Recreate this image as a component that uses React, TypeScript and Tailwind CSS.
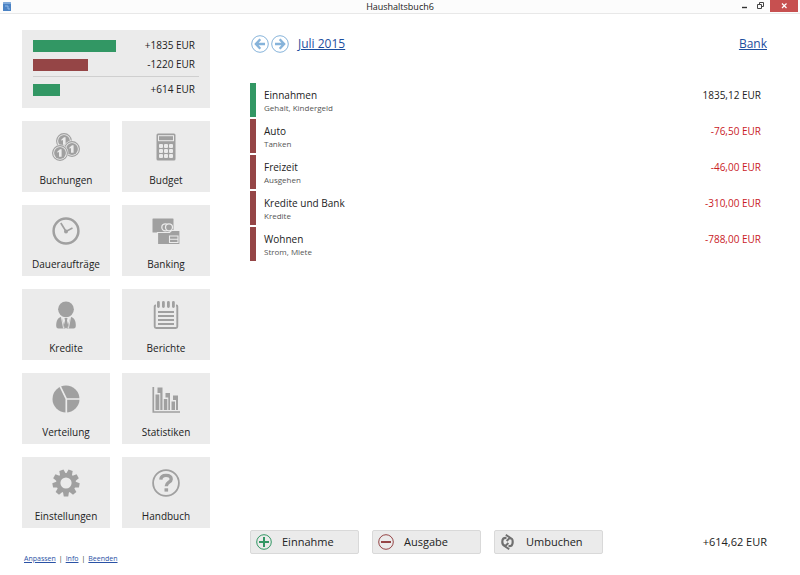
import type { ReactNode } from 'react';

interface Tile {
  label: string;
  icon: ReactNode;
}

interface Category {
  name: string;
  details: string;
  amount: string;
  income?: boolean;
}

const categories: Category[] = [
  { name: 'Einnahmen', details: 'Gehalt, Kindergeld', amount: '1835,12 EUR', income: true },
  { name: 'Auto', details: 'Tanken', amount: '-76,50 EUR' },
  { name: 'Freizeit', details: 'Ausgehen', amount: '-46,00 EUR' },
  { name: 'Kredite und Bank', details: 'Kredite', amount: '-310,00 EUR' },
  { name: 'Wohnen', details: 'Strom, Miete', amount: '-788,00 EUR' },
];

const summary = [
  { value: 83, amount: '+1835 EUR', color: 'bg-[#329764]' },
  { value: 55, amount: '-1220 EUR', color: 'bg-[#954546]' },
];

function TileIcon({ children }: { children: ReactNode }) {
  return (
    <svg viewBox="0 0 28 28" className="size-7 fill-[#a0a0a0]" aria-hidden="true">
      {children}
    </svg>
  );
}

function Coin({ x, y }: { x: number; y: number }) {
  return (
    <g transform={`translate(${x} ${y})`}>
      <circle r="8.4" fill="#ebebeb" />
      <circle r="7.4" fill="none" stroke="#a0a0a0" strokeWidth="1.1" />
      <circle r="5.9" />
      <path d="M-2.6 -1.6L0 -3.8H1.6V3.8H-1V-1L-2.6 -.2z" fill="#ebebeb" />
    </g>
  );
}

const toothAngles = [0, 40, 80, 120, 160, 200, 240, 280, 320];
const dots = [0, 1, 2];

const tiles: Tile[] = [
  {
    label: 'Buchungen',
    icon: (
      <TileIcon>
        <Coin x={12} y={8} />
        <Coin x={20} y={16} />
        <Coin x={8} y={20} />
      </TileIcon>
    ),
  },
  {
    label: 'Budget',
    icon: (
      <TileIcon>
        <rect x="4.5" y="0.5" width="19" height="27" rx="1.5" />
        <rect x="6.5" y="2.7" width="15" height="5" fill="none" stroke="#ebebeb" strokeWidth="1" />
        {dots.map((row) =>
          dots.map((col) => (
            <rect
              key={`${row}-${col}`}
              x={7 + col * 5}
              y={11 + row * 5}
              width="4"
              height="4"
              rx="1"
              fill="#ebebeb"
            />
          )),
        )}
      </TileIcon>
    ),
  },
  {
    label: 'Daueraufträge',
    icon: (
      <TileIcon>
        <circle cx="14" cy="14" r="12.4" fill="none" stroke="#a0a0a0" strokeWidth="2.5" />
        <path d="M8.8 6L14 14.4L20.5 11" fill="none" stroke="#a0a0a0" strokeWidth="1.7" />
        <circle cx="14" cy="14.4" r="2" />
      </TileIcon>
    ),
  },
  {
    label: 'Banking',
    icon: (
      <TileIcon>
        <rect x="0.5" y="1.5" width="21" height="14" rx="0.6" />
        <circle cx="13.3" cy="10.3" r="3.5" fill="none" stroke="#ebebeb" strokeWidth="1.3" />
        <circle cx="17" cy="10.3" r="3.5" stroke="#ebebeb" strokeWidth="1.3" />
        <path d="M5.5 15.5h12l2-2h8.5v14H5.500z" stroke="#ebebeb" strokeWidth="1.2" />
        <path d="M17.500 19h8.500v6.500h-8.500zM17.500 22.200h8.500" fill="none" stroke="#ebebeb" strokeWidth="1.1" />
      </TileIcon>
    ),
  },
  {
    label: 'Kredite',
    icon: (
      <TileIcon>
        <circle cx="14" cy="8.300" r="7.900" />
        <path d="M9.500 15.800L13 27.500H6.500C4.800 27.500 4.200 26.500 4.200 24.500C4.200 19.500 6 16.800 9.500 15.800z" />
        <path d="M18.500 15.800L15 27.500H21.500C23.200 27.500 23.800 26.500 23.800 24.500C23.800 19.500 22 16.800 18.500 15.800z" />
        <path d="M12.500 17H15.500L15 19.500L16.300 25L14 27.800L11.700 25L13 19.500z" />
        <path d="M9.300 15.500L11.600 27.500M18.700 15.500L16.400 27.500" stroke="#ebebeb" strokeWidth="0.900" />
      </TileIcon>
    ),
  },
  {
    label: 'Berichte',
    icon: (
      <TileIcon>
        <path d="M4 4.500H3.500Q2.700 4.500 2.700 5.500V25.500Q2.700 27 4.200 27H23.800Q25.300 27 25.300 25.500V5.500Q25.300 4.500 24.500 4.500H24" fill="none" stroke="#a0a0a0" strokeWidth="1.900" />
        <path d="M6.400 1.500v4M11.400 1.500v4M16.400 1.500v4M21.400 1.500v4" stroke="#a0a0a0" strokeWidth="2.800" strokeLinecap="round" />
        <path d="M6 11h16M6 15h16M6 19h16M6 23h16" stroke="#a0a0a0" strokeWidth="1.800" />
      </TileIcon>
    ),
  },
  {
    label: 'Verteilung',
    icon: (
      <TileIcon>
        <circle cx="14" cy="14" r="13.500" />
        <path d="M7.500 0L14.300 14V28M14.300 14H28" fill="none" stroke="#ebebeb" strokeWidth="1.700" />
      </TileIcon>
    ),
  },
  {
    label: 'Statistiken',
    icon: (
      <TileIcon>
        <path d="M1.300 2V27H28" fill="none" stroke="#a0a0a0" strokeWidth="1.700" />
        <path d="M3.500 9.500h3.800v15.500H3.500zM5.500 2.500h5v22.500H8.300V8H5.500zM11.800 14h3.500v11h-3.500zM13.500 8h4.500v17h-1.700V12.500h-2.800zM19.500 16.500h3.500v8.500h-3.500zM21 10.500h5v14.500h-2V15h-3z" />
      </TileIcon>
    ),
  },
  {
    label: 'Einstellungen',
    icon: (
      <TileIcon>
        {toothAngles.map((angle) => (
          <path
            key={angle}
            d="M10.800 6L11.800 0.500H16.200L17.200 6z"
            transform={`rotate(${angle + 20} 14 14)`}
          />
        ))}
        <circle cx="14" cy="14" r="7.800" fill="none" stroke="#a0a0a0" strokeWidth="4.400" />
      </TileIcon>
    ),
  },
  {
    label: 'Handbuch',
    icon: (
      <TileIcon>
        <circle cx="14" cy="14" r="12.900" fill="none" stroke="#a0a0a0" strokeWidth="1.800" />
        <path d="M8.800 10.600C9 7.700 11 6.400 14 6.400C17 6.400 19.200 7.700 19.200 10.200C19.200 13.300 14.300 13.200 14.300 17.200" fill="none" stroke="#a0a0a0" strokeWidth="3.400" />
        <rect x="12.500" y="19.300" width="3.600" height="3.300" />
      </TileIcon>
    ),
  },
];

function ArrowIcon({ flip }: { flip?: boolean }) {
  return (
    <svg
      viewBox="0 0 18 18"
      className={flip ? 'size-[18px] rotate-180' : 'size-[18px]'}
      fill="none"
      stroke="#86b3da"
      aria-hidden="true"
    >
      <circle cx="9" cy="9" r="8.300" strokeWidth="1" />
      <path d="M9.300 4.300L4.900 9L9.300 13.700M5.500 9H14" strokeWidth="2.400" />
    </svg>
  );
}

function PlusIcon() {
  return (
    <svg viewBox="0 0 16 16" className="size-4" fill="none" stroke="#329764" aria-hidden="true">
      <circle cx="8" cy="8" r="7.300" />
      <path d="M8 3v10M3 8h10" strokeWidth="2" />
    </svg>
  );
}

function MinusIcon() {
  return (
    <svg viewBox="0 0 16 16" className="size-4" fill="none" stroke="#954546" aria-hidden="true">
      <circle cx="8" cy="8" r="7.300" />
      <path d="M3 8h10" strokeWidth="2" />
    </svg>
  );
}

function TransferIcon() {
  return (
    <svg viewBox="0 0 16 16" className="size-4" fill="none" stroke="#707070" aria-hidden="true">
      <path
        d="M5.500 11.800C3 11.600 2.300 10.500 2.300 8C2.300 4.800 3.500 3.600 6.500 3.800M9.500 4.200C12.500 4.400 12.700 5.500 12.700 8C12.700 11.200 11.500 12.400 8.500 12.200"
        strokeWidth="2.200"
      />
      <path d="M5.800 0.800L10 3.600L6.600 7M9.200 15.200L5 12.400L8.400 9" strokeWidth="1.900" />
    </svg>
  );
}

function ActionButton({ label, icon }: { label: string; icon: ReactNode }) {
  return (
    <button
      type="button"
      className="flex h-6 w-[109px] items-center gap-2.5 rounded-xs border border-[#d9d9d9] bg-[#ebebeb] px-[5px] text-[11px]"
    >
      {icon}
      {label}
    </button>
  );
}

function TitleBar() {
  return (
    <header className="grid h-3.5 grid-cols-[1fr_auto_1fr] items-center border-b border-[#e8e8e8] bg-[#fcfcfc]">
      <svg viewBox="0 0 8 9" className="ml-[3px] h-[9px] w-2" aria-hidden="true">
        <rect width="8" height="9" rx="0.500" fill="#4a82c4" />
        <path d="M0 1h8" stroke="#b5d0ee" />
        <path d="M2 4h3v3h2" fill="none" stroke="#8fb8e6" />
      </svg>
      <h1 className="text-[9px] leading-3">Haushaltsbuch6</h1>
      <div className="flex h-full items-start justify-end pr-0.5">
        <button type="button" aria-label="Minimieren" className="h-3 w-4">
          <svg viewBox="0 0 16 12" className="h-3 w-4" aria-hidden="true">
            <path d="M6 7.500h5" stroke="#333" strokeWidth="1.400" />
          </svg>
        </button>
        <button type="button" aria-label="Verkleinern" className="h-3 w-4">
          <svg viewBox="0 0 16 12" className="h-3 w-4" fill="none" stroke="#444" aria-hidden="true">
            <path d="M5.500 4.500h4v4h-4zM7.500 4.500v-2h4v4h-2" />
          </svg>
        </button>
        <button type="button" aria-label="Schließen" className="ml-0.5 h-3 w-7 bg-[#c75050]">
          <svg viewBox="0 0 28 12" className="h-3 w-7" aria-hidden="true">
            <path d="M12 3.500l4.500 4.500M16.500 3.500l-4.500 4.500" stroke="#fff" strokeWidth="1.200" />
          </svg>
        </button>
      </div>
    </header>
  );
}

function Summary() {
  return (
    <section className="bg-[#ebebeb] px-[11px] pt-1.5 pb-1.5">
      {summary.map((row) => (
        <div key={row.amount} className="flex h-[19px] items-center justify-between pr-1">
          <div className={`h-3 ${row.color}`} style={{ width: row.value }} />
          <span className="text-[10px]">{row.amount}</span>
        </div>
      ))}
      <div className="mt-0.5 flex h-[26px] items-center justify-between border-t border-[#cfcfcf] pr-1">
        <div className="h-3 w-[27px] bg-[#329764]" />
        <span className="text-[10px]">+614 EUR</span>
      </div>
    </section>
  );
}

export default function App() {
  return (
    <div className="flex min-h-screen flex-col bg-white font-['Open_Sans','Noto_Sans',sans-serif] text-[#222]">
      <TitleBar />
      <div className="flex flex-1 gap-10 pr-[33px] pl-[22px]">
        <aside className="flex w-[188px] shrink-0 flex-col gap-[13px] pt-4 pb-2.5">
          <Summary />
          <nav className="grid grid-cols-2 gap-x-3 gap-y-[13px]">
            {tiles.map((tile) => (
              <button
                key={tile.label}
                type="button"
                className="flex h-[71px] flex-col items-center gap-3 bg-[#ebebeb] pt-3 text-[10px] leading-[14px]"
              >
                {tile.icon}
                {tile.label}
              </button>
            ))}
          </nav>
          <div className="mt-auto flex gap-[3px] pl-0.5 text-[7px] leading-3 text-[#2a52a5]">
            <a href="#anpassen" className="underline">Anpassen</a>
            <span className="text-[#222]">|</span>
            <a href="#info" className="underline">Info</a>
            <span className="text-[#222]">|</span>
            <a href="#beenden" className="underline">Beenden</a>
          </div>
        </aside>

        <main className="flex flex-1 flex-col pt-5 pb-[21px]">
          <div className="flex h-5 items-center text-xs text-[#1d4e9e]">
            <div className="mr-[9px] flex gap-0.5 pl-px">
              <button type="button" aria-label="Vorheriger Monat">
                <ArrowIcon />
              </button>
              <button type="button" aria-label="Nächster Monat">
                <ArrowIcon flip />
              </button>
            </div>
            <a href="#monat" className="underline">Juli 2015</a>
            <a href="#konto" className="ml-auto underline">Bank</a>
          </div>

          <ul className="mt-[29px] flex flex-col gap-0.5">
            {categories.map((item) => (
              <li
                key={item.name}
                className={`flex h-[34px] justify-between border-l-6 pt-1 pr-1.5 pl-2 ${
                  item.income ? 'border-[#329764]' : 'border-[#954546]'
                }`}
              >
                <div>
                  <p className="text-[10px] leading-4">{item.name}</p>
                  <p className="text-[8px] leading-[10px] text-[#555]">{item.details}</p>
                </div>
                <span className={`text-[10px] leading-4 ${item.income ? '' : 'text-[#c9201f]'}`}>
                  {item.amount}
                </span>
              </li>
            ))}
          </ul>

          <div className="mt-auto flex items-center gap-[13px]">
            <ActionButton label="Einnahme" icon={<PlusIcon />} />
            <ActionButton label="Ausgabe" icon={<MinusIcon />} />
            <ActionButton label="Umbuchen" icon={<TransferIcon />} />
            <span className="ml-auto text-[11px]">+614,62 EUR</span>
          </div>
        </main>
      </div>
    </div>
  );
}
